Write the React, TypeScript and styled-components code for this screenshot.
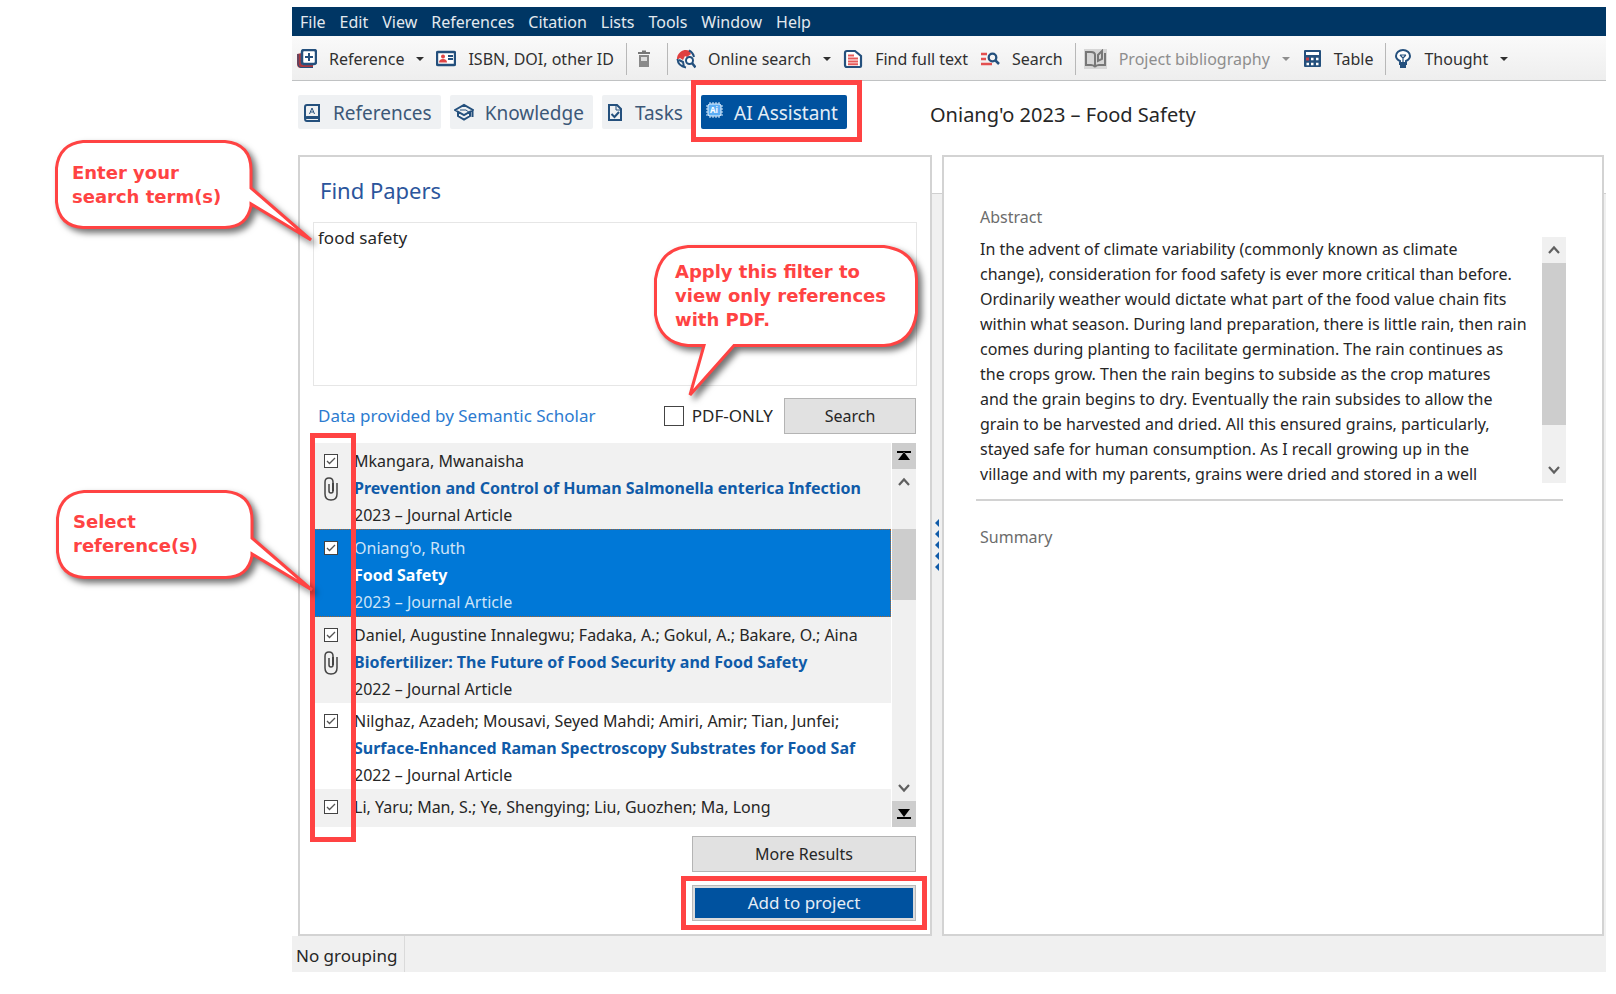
import React from 'react';
import styled, { createGlobalStyle, css } from 'styled-components';

const RED = '#ff4343';
const BLUE = '#00529f';
const NAVY = '#24507d';

const GlobalStyle = createGlobalStyle`
  * { box-sizing: border-box; }
  body {
    margin: 0;
    background: #fff;
    color: #262626;
    font-family: "Noto Sans", "Open Sans", sans-serif;
    font-size: 16px;
    line-height: 24px;
  }
  button, input, textarea { font: inherit; color: inherit; margin: 0; }
  h1, h2, h3, p, ul { margin: 0; padding: 0; font-weight: 400; }
`;

const Page = styled.div`
  position: relative;
  padding: 7px 10px 22px 292px;
`;

const MenuBar = styled.nav`
  display: flex;
  align-items: center;
  gap: 14px;
  height: 29px;
  padding: 0 8px;
  background: #003664;
`;

const MenuItem = styled.button`
  padding: 0;
  border: 0;
  background: none;
  color: #e3e9ef;
`;

const Toolbar = styled.div`
  display: flex;
  align-items: center;
  gap: 12px;
  height: 45px;
  padding: 2px 5px 0;
  background: linear-gradient(#fafafa, #eee);
  border-bottom: 1px solid #c0c2c3;
`;

const ToolButton = styled.button`
  display: flex;
  align-items: center;
  gap: 12px;
  padding: 0;
  border: 0;
  background: none;
  white-space: nowrap;
  color: #303030;
  &:disabled { color: #8e8e8e; }
  svg { flex: none; }
`;

const Separator = styled.span`
  width: 1px;
  height: 32px;
  margin-right: -4px;
  background: #b8b8b8;
`;

const Caret = styled.span`
  border: 4px solid transparent;
  border-top-color: currentColor;
  border-bottom-width: 0;
`;

const TabBar = styled.div`
  display: flex;
  align-items: center;
  height: 74px;
  padding: 0 6px 12px;
`;

const Tabs = styled.div`
  display: flex;
  gap: 9px;
  flex: 0 0 632px;
`;

const Tab = styled.button<{ $active?: boolean }>`
  position: relative;
  display: flex;
  align-items: center;
  gap: 11px;
  height: 34px;
  padding: 2px 9px 0 4px;
  border: 0;
  border-radius: 2px;
  background: ${p => (p.$active ? BLUE : '#eff1f3')};
  color: ${p => (p.$active ? '#e4edf6' : '#3c5878')};
  font-size: 19px;
  white-space: nowrap;
`;

const Highlight = styled.span<{ $inset: string }>`
  position: absolute;
  inset: ${p => p.$inset};
  border: 5px solid ${RED};
  pointer-events: none;
`;

const DocumentTitle = styled.h1`
  padding-top: 5px;
  font-size: 20px;
  white-space: nowrap;
`;

const Workspace = styled.main`
  display: grid;
  grid-template-columns: minmax(0, 634fr) 10px minmax(0, 662fr);
  margin-left: 6px;
  padding-right: 2px;
  background: linear-gradient(#fff 38px, #d0d0d0 38px, #d0d0d0 39px, #f0f0f0 39px);
`;

const Panel = styled.section`
  border: 2px solid #d3d3d3;
  background: #fff;
`;

const SearchPanel = styled(Panel)`
  position: relative;
  padding: 20px 13px 13px;
`;

const PanelTitle = styled.h2`
  padding-left: 7px;
  color: #2b559c;
  font-size: 22px;
  line-height: 26px;
`;

const QueryBox = styled.textarea`
  display: block;
  width: 100%;
  height: 164px;
  margin-top: 19px;
  padding: 3px 4px;
  border: 1px solid #e6e6e6;
  outline: 0;
  resize: none;
  font-size: 17px;
`;

const SearchRow = styled.div`
  display: flex;
  align-items: center;
  margin: 12px 0 9px;
  padding: 0 1px 0 5px;
`;

const SourceLink = styled.a`
  margin-right: auto;
  color: #2c7bd0;
  font-size: 17px;
  text-decoration: none;
`;

const PdfLabel = styled.label`
  display: flex;
  align-items: center;
  gap: 8px;
  margin-right: 11px;
  font-size: 17px;
`;

const box = css<{ $size: number }>`
  appearance: none;
  flex: none;
  width: ${p => p.$size}px;
  height: ${p => p.$size}px;
  border: 1px solid #444;
  background: #fff;
`;

const CheckInput = styled.input<{ $size: number }>`
  ${box}
`;

const CheckHolder = styled.span`
  position: relative;
  display: flex;
  svg { position: absolute; inset: 0; pointer-events: none; }
`;

const PushButton = styled.button<{ $width: number }>`
  width: ${p => p.$width}px;
  height: 36px;
  border: 1px solid #b4b4b4;
  background: #e1e1e1;
`;

const PrimaryButton = styled.button`
  display: block;
  width: 224px;
  height: 36px;
  border: 1px solid #b9b9b9;
  outline: 0;
  padding: 0;
  background: ${BLUE};
  box-shadow: inset 0 0 0 2px #dcdcdc;
  color: #e4edf6;
  font-size: 17px;
`;

const Results = styled.div`
  display: flex;
  gap: 1px;
  height: 384px;
  margin-right: 1px;
`;

const ResultList = styled.ul`
  flex: 1;
  min-width: 0;
  overflow: hidden;
  list-style: none;
`;

const ResultRow = styled.li<{ $shaded?: boolean; $selected?: boolean }>`
  display: flex;
  gap: 16px;
  height: 86px;
  padding: 5px 0 0 11px;
  background: ${p => (p.$selected ? '#0078d7' : p.$shaded ? '#f1f1f1' : '#fff')};
  ${p => p.$selected && css`
    height: 88px;
    padding-left: 10px;
    border: 1px dotted #a8622c;
    color: #cfe4f7;
  `}
`;

const Marks = styled.div`
  display: flex;
  flex-direction: column;
  align-items: center;
  gap: 9px;
  width: 14px;
  padding-top: 6px;
`;

const Entry = styled.label`
  flex: 1;
  min-width: 0;
  line-height: 27px;
  white-space: nowrap;
  overflow: hidden;
`;

const EntryLine = styled.span`
  display: block;
`;

const EntryTitle = styled.strong<{ $selected?: boolean }>`
  display: block;
  color: ${p => (p.$selected ? '#fff' : '#105ba8')};
  font-weight: 700;
`;

const Track = styled.div`
  display: flex;
  flex-direction: column;
  align-items: center;
  flex: none;
  width: 24px;
  background: #f0f0f0;
  color: #606060;
`;

const ScrollButton = styled.button<{ $filled?: boolean }>`
  display: grid;
  place-items: center;
  width: 100%;
  height: 26px;
  padding: 0;
  border: 0;
  background: ${p => (p.$filled ? '#cdcdcd' : 'none')};
`;

const Thumb = styled.div<{ $before: number; $length: number }>`
  width: 100%;
  height: ${p => p.$length}px;
  margin: ${p => p.$before}px 0 auto;
  background: #cdcdcd;
`;

const Actions = styled.div`
  display: flex;
  flex-direction: column;
  align-items: flex-end;
  gap: 13px;
  margin: 9px 1px 0 0;
`;

const Anchor = styled.div`
  position: relative;
`;

const Splitter = styled.div`
  display: flex;
  flex-direction: column;
  align-items: flex-start;
  gap: 3px;
  padding: 364px 0 0 3px;
`;

const SplitMark = styled.span`
  border: 4px solid transparent;
  border-left-width: 0;
  border-right-color: #105ba8;
`;

const DetailPanel = styled(Panel)`
  padding: 48px 39px 0 32px;
`;

const FieldLabel = styled.h3`
  padding-left: 4px;
  color: #6c6c6c;
  font-size: 16px;
`;

const AbstractRow = styled.div`
  display: flex;
  justify-content: space-between;
  height: 272px;
  margin-bottom: 24px;
  padding: 8px 0 16px 4px;
  border-bottom: 2px solid #d2d2d2;
`;

const AbstractText = styled.p`
  line-height: 25px;
  white-space: pre;
`;

const AbstractTrack = styled(Track)`
  margin-right: -3px;
`;

const StatusBar = styled.footer`
  display: flex;
  height: 36px;
  background: #f0f0f0;
  font-size: 17px;
`;

const StatusCell = styled.span`
  padding: 8px 7px 0 4px;
  border-right: 1px solid #dadada;
`;

const Callout = styled.aside<{ $place: string; $width: number; $pad: string }>`
  position: absolute;
  ${p => p.$place}
  width: ${p => p.$width}px;
  padding: ${p => p.$pad};
  color: ${RED};
  font: bold 18px/24px "DejaVu Sans", sans-serif;
  white-space: nowrap;
  z-index: 2;
  pointer-events: none;
  svg {
    position: absolute;
    top: 0;
    left: 0;
    overflow: visible;
    z-index: -1;
    filter: drop-shadow(4px 4px 3px rgba(0, 0, 0, 0.55));
  }
`;

const Bubble = ({ d }: { d: string }) => (
  <svg width="10" height="10" aria-hidden="true">
    <path d={d} fill="#fff" stroke={RED} strokeWidth="3" />
  </svg>
);

const SIDE_BUBBLE =
  'M28 1.500H170Q196 4 196 30V48L256 100L196 64V66Q192 87 170 87.500H28Q4 86 1.500 62V28Q4 4 28 1.500Z';

const Icon = ({ children, w = 20 }: { children: React.ReactNode; w?: number }) => (
  <svg width={w} height="20" viewBox={`0 0 ${w} 20`} fill="none" stroke={NAVY} strokeWidth="2" aria-hidden="true">
    {children}
  </svg>
);

const AddReferenceIcon = () => (
  <Icon>
    <path d="M0 5V15Q0 19 4 19H16V16H5V4Z" fill="#a83840" stroke="none" />
    <path d="M1 5V15Q1 18 4 18.500H16" strokeWidth="1" />
    <rect x="5" y="1" width="14" height="14" rx="2" fill="#fff" strokeWidth="2.500" />
    <path d="M12 4V12M8 8H16" />
  </Icon>
);
const IdCardIcon = () => (
  <Icon>
    <rect x="1" y="3" width="18" height="13" rx="1" fill="#fff" strokeWidth="2.400" />
    <circle cx="7" cy="7.500" r="2" fill="#e04545" stroke="none" />
    <path d="M3 13.500Q3 10 7 10T11 13.500Z" fill="#e04545" stroke="none" />
    <path d="M12 7H17M12 10H17" />
  </Icon>
);
const TrashIcon = () => (
  <Icon>
    <path d="M3 4H15M7 2.500H11" stroke="#777" />
    <path d="M5 7H13V17H5Z" stroke="#888" fill="#ddd" />
    <path d="M4 12H14V18H4Z" fill="#8a8a8a" stroke="none" />
  </Icon>
);
const GlobeSearchIcon = () => (
  <Icon>
    <path d="M1 11A9 9 0 0 1 13 1.500L15 5L11 8L9 7L7 11L4 9Z" fill="#e04040" stroke="none" />
    <path d="M13 1.500Q17 3.500 18 8" />
    <path d="M1.500 10Q2 17 10 18.500M3 11L7 13L8 18" />
    <circle cx="13.500" cy="11.500" r="3.500" fill="#fff" />
    <path d="M16 14L19.500 18.500" strokeWidth="2.500" />
  </Icon>
);
const DocumentIcon = () => (
  <Icon>
    <path d="M4 2H12L18 7V17Q18 18 17 18H4Q2 18 2 16V4Q2 2 4 2Z" fill="#fff" strokeWidth="2.200" />
    <path d="M5 6.500H11M5 9.500H15M5 12.500H15M5 15.200H15" stroke="#e65a5a" />
  </Icon>
);
const ListSearchIcon = () => (
  <Icon>
    <path d="M1 5H7M1 10H6M1 15H12" stroke="#e35050" strokeWidth="2.400" />
    <circle cx="12.500" cy="8.500" r="3.800" strokeWidth="2.300" />
    <path d="M15.500 11.500L19 15" strokeWidth="2.500" />
  </Icon>
);
const BibliographyIcon = () => (
  <Icon w={23}>
    <rect width="23" height="20" fill="#d6d6d6" stroke="none" />
    <path d="M2 3H7Q11 3 11 6V18Q10 16 7 16H2ZM11 18Q12 16 15 16H21V4M14 12V6L18 2V10Z" stroke="#777" />
  </Icon>
);
const TableIcon = () => (
  <Icon>
    <rect x="2" y="1" width="17" height="17" rx="1" fill={NAVY} stroke="none" />
    <path d="M4 4.500H17" stroke="#fff" strokeWidth="3" />
    <path d="M4 10H7" stroke="#c5414a" strokeWidth="3" />
    <path d="M9 10H11.500M14 10H16.500M4.500 15H7M9 15H11.500M14 15H16.500" stroke="#fff" strokeWidth="2.500" />
  </Icon>
);
const BulbIcon = () => (
  <Icon w={18}>
    <path d="M6 14V12Q2 10 2 7A7 6 0 0 1 16 7Q16 10 12 12V14Z" fill="#fff" />
    <path d="M9 13V9L6 6M9 9L12 6M6 6H12" strokeWidth="1.200" />
    <path d="M5 14.500H13M6 17.500H12" strokeWidth="3" />
  </Icon>
);
const BookIcon = () => (
  <Icon>
    <path d="M3 15V4Q3 2 5 2H17V18H5Q3 18 3 15.500Q3 14 5 14H17" />
    <path d="M4 14H16V16H4Z" fill={NAVY} stroke="none" />
    <path d="M7.500 11L10 5L12.500 11M8.500 9H11.500" strokeWidth="1" />
  </Icon>
);
const KnowledgeIcon = () => (
  <Icon>
    <path d="M1 7L10 2L19 7L10 12ZM4 9V13L10 16.500L16 13V9M18.500 7V14" />
    <path d="M6 7H12L16 10" strokeWidth="1" />
  </Icon>
);
const TaskIcon = () => (
  <Icon w={18}>
    <path d="M3 2H11L15 6V17H3Z" />
    <path d="M10 2V7H15" strokeWidth="1" />
    <path d="M5.500 11L8.500 14L13 9" />
  </Icon>
);
const ChipIcon = () => (
  <svg width="18" height="26" viewBox="0 0 18 26" aria-hidden="true">
    <path d="M5 2V18M8 2V18M11 2V18M14 2V18M1 6H18M1 9H18M1 12H18M1 15H18" stroke="#d9ebfb" strokeWidth="1" />
    <rect x="3" y="4" width="13" height="12" rx="2" fill="#5badf5" stroke="#e4f2ff" />
    <text x="9" y="13" fontSize="8" fontWeight="700" textAnchor="middle" fill="#fff">Ai</text>
  </svg>
);
const ClipIcon = () => (
  <svg width="14" height="24" viewBox="0 0 14 24" fill="none" stroke="#444" strokeWidth="1.500" aria-hidden="true">
    <path d="M5 7V14Q5 16 7 16T9 14V5Q9 1 5 1T1 5V17Q1 23 7 23T13 17V6" />
    <path d="M9 6V14" strokeWidth="2" />
  </svg>
);
const Tick = () => (
  <svg width="14" height="14" viewBox="0 0 14 14" fill="none" stroke="#555" strokeWidth="1.300" aria-hidden="true">
    <path d="M3 7L5.500 9.500L11 4" />
  </svg>
);
const Chevron = ({ down }: { down?: boolean }) => (
  <svg width="12" height="10" viewBox="0 0 12 10" fill="none" stroke="#606060" strokeWidth="2.200" aria-hidden="true">
    <path d={down ? 'M1 2L6 7.500L11 2' : 'M1 8L6 2.500L11 8'} />
  </svg>
);
const EndMark = ({ down }: { down?: boolean }) => (
  <svg width="14" height="10" viewBox="0 0 14 10" fill="#000" aria-hidden="true">
    <path d={down ? 'M1 0H13L7 8ZM0 8H14V10H0Z' : 'M1 9H13L7 1ZM0 0H14V2H0Z'} />
  </svg>
);

const MENU = ['File', 'Edit', 'View', 'References', 'Citation', 'Lists', 'Tools', 'Window', 'Help'];

const RESULTS = [
  { authors: 'Mkangara, Mwanaisha', title: 'Prevention and Control of Human Salmonella enterica Infection', meta: '2023 – Journal Article', clip: true, shaded: true },
  { authors: "Oniang'o, Ruth", title: 'Food Safety', meta: '2023 – Journal Article', selected: true },
  { authors: 'Daniel, Augustine Innalegwu; Fadaka, A.; Gokul, A.; Bakare, O.; Aina', title: 'Biofertilizer: The Future of Food Security and Food Safety', meta: '2022 – Journal Article', clip: true, shaded: true },
  { authors: 'Nilghaz, Azadeh; Mousavi, Seyed Mahdi; Amiri, Amir; Tian, Junfei;', title: 'Surface-Enhanced Raman Spectroscopy Substrates for Food Saf', meta: '2022 – Journal Article' },
  { authors: 'Li, Yaru; Man, S.; Ye, Shengying; Liu, Guozhen; Ma, Long', title: '', meta: '', shaded: true },
];

const ABSTRACT = `In the advent of climate variability (commonly known as climate
change), consideration for food safety is ever more critical than before.
Ordinarily weather would dictate what part of the food value chain fits
within what season. During land preparation, there is little rain, then rain
comes during planting to facilitate germination. The rain continues as
the crops grow. Then the rain begins to subside as the crop matures
and the grain begins to dry. Eventually the rain subsides to allow the
grain to be harvested and dried. All this ensured grains, particularly,
stayed safe for human consumption. As I recall growing up in the
village and with my parents, grains were dried and stored in a well`;

export default function App() {
  return (
    <Page>
      <GlobalStyle />
      <MenuBar>
        {MENU.map(name => <MenuItem key={name}>{name}</MenuItem>)}
      </MenuBar>
      <Toolbar>
        <ToolButton><AddReferenceIcon />Reference<Caret /></ToolButton>
        <ToolButton><IdCardIcon />ISBN, DOI, other ID</ToolButton>
        <Separator />
        <ToolButton aria-label="Delete"><TrashIcon /></ToolButton>
        <Separator />
        <ToolButton><GlobeSearchIcon />Online search<Caret /></ToolButton>
        <ToolButton><DocumentIcon />Find full text</ToolButton>
        <ToolButton><ListSearchIcon />Search</ToolButton>
        <Separator />
        <ToolButton disabled><BibliographyIcon />Project bibliography<Caret /></ToolButton>
        <ToolButton><TableIcon />Table</ToolButton>
        <Separator />
        <ToolButton><BulbIcon />Thought<Caret /></ToolButton>
      </Toolbar>
      <TabBar>
        <Tabs>
          <Tab><BookIcon />References</Tab>
          <Tab><KnowledgeIcon />Knowledge</Tab>
          <Tab><TaskIcon />Tasks</Tab>
          <Tab $active><ChipIcon />AI Assistant<Highlight $inset="-15px -15px -13px -10px" /></Tab>
        </Tabs>
        <DocumentTitle>Oniang'o 2023 – Food Safety</DocumentTitle>
      </TabBar>
      <Workspace>
        <SearchPanel>
          <PanelTitle>Find Papers</PanelTitle>
          <QueryBox aria-label="Search terms" defaultValue="food safety" />
          <SearchRow>
            <SourceLink href="#source">Data provided by Semantic Scholar</SourceLink>
            <PdfLabel><CheckInput type="checkbox" $size={20} />PDF-ONLY</PdfLabel>
            <PushButton $width={132}>Search</PushButton>
          </SearchRow>
          <Anchor>
            <Results>
              <ResultList>
                {RESULTS.map((r, i) => (
                  <ResultRow key={r.authors} $shaded={r.shaded} $selected={r.selected}>
                    <Marks>
                      <CheckHolder>
                        <CheckInput type="checkbox" id={`result-${i}`} $size={14} defaultChecked />
                        <Tick />
                      </CheckHolder>
                      {r.clip && <ClipIcon />}
                    </Marks>
                    <Entry htmlFor={`result-${i}`}>
                      <EntryLine>{r.authors}</EntryLine>
                      <EntryTitle $selected={r.selected}>{r.title}</EntryTitle>
                      <EntryLine>{r.meta}</EntryLine>
                    </Entry>
                  </ResultRow>
                ))}
              </ResultList>
              <Track>
                <ScrollButton $filled aria-label="First result"><EndMark /></ScrollButton>
                <ScrollButton aria-label="Scroll up"><Chevron /></ScrollButton>
                <Thumb $before={34} $length={71} />
                <ScrollButton aria-label="Scroll down"><Chevron down /></ScrollButton>
                <ScrollButton $filled aria-label="Last result"><EndMark down /></ScrollButton>
              </Track>
            </Results>
            <Highlight $inset="-10px auto -15px -3px" style={{ width: 46 }} />
          </Anchor>
          <Actions>
            <PushButton $width={224}>More Results</PushButton>
            <Anchor>
              <PrimaryButton>Add to project</PrimaryButton>
              <Highlight $inset="-9px -11px" />
            </Anchor>
          </Actions>
          <Callout $place="top: 88px; right: 12px;" $width={264} $pad="15px 0 0 21px">
            <Bubble d="M34 1.500H230Q262 6 262.500 34V68Q258 99 230 100.500H80L36 150L50 100.500H34Q6 98 1.500 70V34Q6 4 34 1.500Z" />
            Apply this filter to<br />view only references<br />with PDF.
          </Callout>
        </SearchPanel>
        <Splitter>
          <SplitMark /><SplitMark /><SplitMark /><SplitMark /><SplitMark />
        </Splitter>
        <DetailPanel>
          <FieldLabel>Abstract</FieldLabel>
          <AbstractRow>
            <AbstractText>{ABSTRACT}</AbstractText>
            <AbstractTrack>
              <ScrollButton aria-label="Scroll abstract up"><Chevron /></ScrollButton>
              <Thumb $before={0} $length={162} />
              <ScrollButton aria-label="Scroll abstract down"><Chevron down /></ScrollButton>
            </AbstractTrack>
          </AbstractRow>
          <FieldLabel>Summary</FieldLabel>
        </DetailPanel>
      </Workspace>
      <StatusBar>
        <StatusCell>No grouping</StatusCell>
      </StatusBar>
      <Callout $place="top: 140px; left: 55px;" $width={198} $pad="21px 0 0 17px">
        <Bubble d={SIDE_BUBBLE} />
        Enter your<br />search term(s)
      </Callout>
      <Callout $place="top: 490px; left: 56px;" $width={198} $pad="20px 0 0 17px">
        <Bubble d={SIDE_BUBBLE} />
        Select<br />reference(s)
      </Callout>
    </Page>
  );
}
